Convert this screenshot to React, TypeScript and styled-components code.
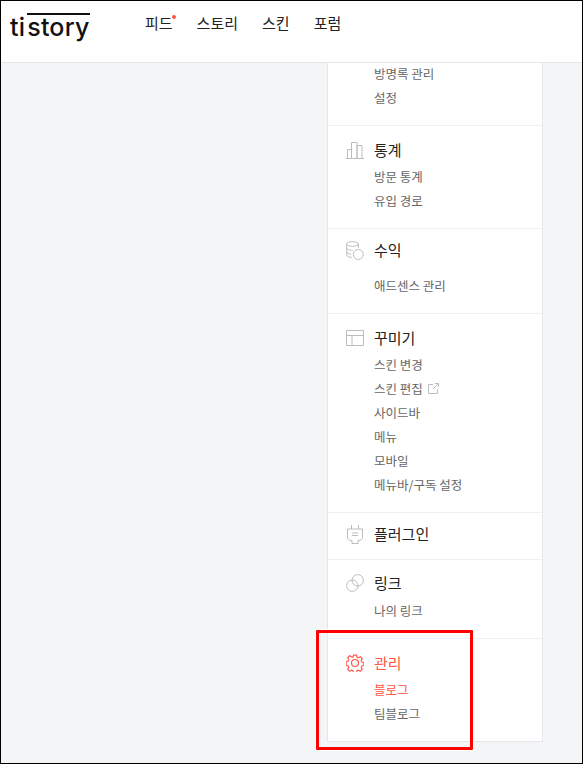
import React, { FC } from "react";
import styled, { createGlobalStyle } from "styled-components";

const fontStack = `"Noto Sans CJK KR", "Noto Sans", sans-serif`;
const iconColor = "#bdbdbd";
const accentColor = "#ff5544";

const GlobalStyle = createGlobalStyle`
  html, body {
    margin: 0;
    padding: 0;
    background: #fff;
  }
  body {
    font-family: ${fontStack};
  }
`;

const ChartIcon: FC = () => (
  <svg width="18" height="18" viewBox="0 0 18 18" fill="none" stroke={iconColor}>
    <path d="M0 17.500h18M1.500 17.500v-9h4v9M5.500 17.500V1.500h5.500v16M11 17.500V4.500h5v13" />
  </svg>
);

const CoinIcon: FC = () => (
  <svg width="18" height="20" viewBox="0 0 18 20" fill="none" stroke={iconColor}>
    <ellipse cx="6.500" cy="4" rx="5.800" ry="2.300" />
    <path d="M.7 4v11c0 1.300 2.300 2.300 5 2.300M.7 8c0 1.300 2.600 2.300 6 2.300M.7 12c0 1.200 2.100 2.100 4.500 2.200M12.300 4v4" />
    <circle cx="12.300" cy="14.500" r="5" />
  </svg>
);

const LayoutIcon: FC = () => (
  <svg width="18" height="16" viewBox="0 0 18 16" fill="none" stroke={iconColor}>
    <path d="M.5.5h17v15H.5zM.5 5.500h17M6 5.500v10" />
  </svg>
);

const PlugIcon: FC = () => (
  <svg width="16" height="19" viewBox="0 0 16 19" fill="none" stroke={iconColor}>
    <path d="M4.500 0v4M11.500 0v4M.5 4h15v8c0 2-1.500 3.500-3.500 3.500h-1v3H5v-3H4c-2 0-3.500-1.500-3.500-3.500zM5 8h6M5 10.500h6" />
  </svg>
);

const LinkIcon: FC = () => (
  <svg width="18" height="18" viewBox="0 0 18 18" fill="none" stroke={iconColor}>
    <circle cx="6.300" cy="11.700" r="5.700" />
    <circle cx="11.700" cy="6.300" r="5.700" />
  </svg>
);

const GearIcon: FC = () => (
  <svg width="18" height="18" viewBox="0 0 18 18" fill="none" stroke={accentColor} strokeWidth="1.200" strokeLinejoin="round">
    <circle cx="9" cy="9" r="3.500" />
    <path d="M7.400.7h3.200l.4 2.100 1.700.7 1.800-1.200 2.200 2.200-1.200 1.800.7 1.700 2.100.4v3.200l-2.100.4-.7 1.700 1.200 1.800-2.200 2.200-1.800-1.200-1.700.7-.4 2.100H7.400l-.4-2.100-1.700-.7-1.800 1.200-2.200-2.200 1.200-1.800-.7-1.700-2.100-.4V7.400l2.100-.4.700-1.700L1.300 3.500 3.500 1.300l1.800 1.200L7 2.800z" transform="translate(.45 .45) scale(.95)" />
  </svg>
);

const ExternalIcon: FC = () => (
  <svg width="11" height="11" viewBox="0 0 11 11" fill="none" stroke={iconColor}>
    <path d="M5 1.500H.5v9h9V6M5 6l5.500-5.500M7 .5h3.500V4" />
  </svg>
);

type MenuSection = {
  title?: string;
  icon?: React.ReactNode;
  items: { label: string; external?: boolean; active?: boolean }[];
  top: number;
  gap?: number;
  bottom: number;
  active?: boolean;
};

const sections: MenuSection[] = [
  {
    items: [{ label: "방명록 관리" }, { label: "설정" }],
    top: 0,
    bottom: 15,
  },
  {
    title: "통계",
    icon: <ChartIcon />,
    items: [{ label: "방문 통계" }, { label: "유입 경로" }],
    top: 12,
    gap: 3,
    bottom: 15,
  },
  {
    title: "수익",
    icon: <CoinIcon />,
    items: [{ label: "애드센스 관리" }],
    top: 9,
    gap: 12,
    bottom: 15,
  },
  {
    title: "꾸미기",
    icon: <LayoutIcon />,
    items: [
      { label: "스킨 변경" },
      { label: "스킨 편집", external: true },
      { label: "사이드바" },
      { label: "메뉴" },
      { label: "모바일" },
      { label: "메뉴바/구독 설정" },
    ],
    top: 12,
    gap: 3,
    bottom: 15,
  },
  {
    title: "플러그인",
    icon: <PlugIcon />,
    items: [],
    top: 9,
    bottom: 13,
  },
  {
    title: "링크",
    icon: <LinkIcon />,
    items: [{ label: "나의 링크" }],
    top: 11,
    gap: 4,
    bottom: 15,
  },
  {
    title: "관리",
    icon: <GearIcon />,
    items: [{ label: "블로그", active: true }, { label: "팀블로그" }],
    top: 12,
    gap: 3,
    bottom: 15,
    active: true,
  },
];

export default function App() {
  return (
    <>
      <GlobalStyle />
      <Frame>
        <Header>
          <Logo>
            ti<LogoBar>story</LogoBar>
          </Logo>
          <Nav>
            <NavItem $dot>피드</NavItem>
            <NavItem>스토리</NavItem>
            <NavItem>스킨</NavItem>
            <NavItem>포럼</NavItem>
          </Nav>
        </Header>
        <Main>
          <Panel>
            {sections.map((section, i) => (
              <Section key={i} $top={section.top} $bottom={section.bottom}>
                {section.title && (
                  <TitleRow $gap={section.gap ?? 0}>
                    <IconSlot>{section.icon}</IconSlot>
                    <Title $active={section.active}>{section.title}</Title>
                  </TitleRow>
                )}
                {section.items.map((item) => (
                  <Item key={item.label} $active={item.active}>
                    {item.label}
                    {item.external && (
                      <ExternalSlot>
                        <ExternalIcon />
                      </ExternalSlot>
                    )}
                  </Item>
                ))}
              </Section>
            ))}
          </Panel>
        </Main>
        <Highlight />
      </Frame>
    </>
  );
}

const Frame = styled.div`
  position: relative;
  box-sizing: border-box;
  width: 583px;
  height: 764px;
  border: 1px solid #000;
  overflow: hidden;
  display: flex;
  flex-direction: column;
  background: #f4f5f7;
`;

const Header = styled.header`
  position: relative;
  z-index: 1;
  flex: none;
  box-sizing: border-box;
  height: 62px;
  display: flex;
  align-items: flex-start;
  background: #fff;
  border-bottom: 1px solid #e6e6e8;
`;

const Logo = styled.div`
  width: 135px;
  box-sizing: border-box;
  padding: 9px 0 0 9px;
  font-family: Inter, sans-serif;
  font-size: 25px;
  font-weight: 500;
  line-height: 34px;
  letter-spacing: 0.2px;
  color: #111;
`;

const LogoBar = styled.span`
  position: relative;
  margin-left: 2px;
  &::before {
    content: "";
    position: absolute;
    left: 0;
    right: 0;
    top: 1px;
    height: 2px;
    background: #111;
  }
`;

const Nav = styled.nav`
  display: flex;
  gap: 24px;
  position: relative;
  margin-left: 9px;
  padding-top: 10px;
`;

const NavItem = styled.a<{ $dot?: boolean }>`
  position: relative;
  font-size: 15px;
  font-weight: 400;
  line-height: 24px;
  color: #222;
  &::after {
    content: "";
    display: ${(p) => (p.$dot ? "block" : "none")};
    position: absolute;
    right: -3px;
    top: 4px;
    width: 4px;
    height: 4px;
    border-radius: 50%;
    background: ${accentColor};
  }
`;

const Main = styled.main`
  flex: 1;
  min-height: 0;
  padding-left: 326px;
`;

const Panel = styled.div`
  box-sizing: border-box;
  width: 216px;
  margin-top: -1px;
  background: #fff;
  border: 1px solid #e5e7ed;
  border-top: 0;
`;

const Section = styled.section<{ $top: number; $bottom: number }>`
  padding: ${(p) => p.$top}px 0 ${(p) => p.$bottom}px;
  border-bottom: 1px solid #eff0f3;
  &:last-child {
    border-bottom: 0;
  }
`;

const TitleRow = styled.div<{ $gap: number }>`
  display: flex;
  align-items: center;
  height: 24px;
  margin-bottom: ${(p) => p.$gap}px;
  padding-left: 18px;
`;

const IconSlot = styled.span`
  flex: none;
  display: flex;
  align-items: center;
  justify-content: center;
  width: 18px;
  height: 24px;
  margin-right: 10px;
`;

const Title = styled.span<{ $active?: boolean }>`
  font-size: 15px;
  line-height: 24px;
  color: ${(p) => (p.$active ? accentColor : "#222")};
`;

const Item = styled.div<{ $active?: boolean }>`
  box-sizing: border-box;
  display: flex;
  align-items: center;
  height: 24px;
  padding: 0 0 1px 46px;
  font-size: 12.500px;
  color: ${(p) => (p.$active ? accentColor : "#666")};
`;

const ExternalSlot = styled.span`
  display: flex;
  margin-left: 5px;
`;

const Highlight = styled.div`
  position: absolute;
  left: 315px;
  top: 629px;
  box-sizing: border-box;
  width: 157px;
  height: 120px;
  border: 3px solid #f00;
  border-radius: 1px;
  box-shadow: 0 0 0 1px #fff;
`;
